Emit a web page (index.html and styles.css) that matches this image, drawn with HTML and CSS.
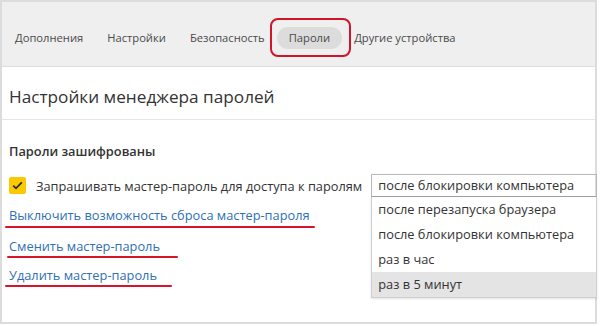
FILE: index.html
```html
<!DOCTYPE html>
<html lang="ru">
<head>
<meta charset="utf-8">
<link rel="stylesheet" href="styles.css">
</head>
<body>
<div class="frame">
  <nav class="tabs">
    <span class="tab">Дополнения</span>
    <span class="tab">Настройки</span>
    <span class="tab">Безопасность</span>
    <span class="tab active">Пароли</span>
    <span class="tab">Другие устройства</span>
  </nav>
  <main class="content">
    <h1 class="title">Настройки менеджера паролей</h1>
    <section class="section">
      <h2 class="subtitle">Пароли зашифрованы</h2>
      <div class="row">
        <span class="check"><svg width="11" height="9" viewBox="0 0 11 9"><path d="M1.2 4.6 L4 7.3 L9.8 1.4" fill="none" stroke="#2b2b2b" stroke-width="1.8"/></svg></span>
        <span class="label">Запрашивать мастер-пароль для доступа к паролям</span>
        <div class="select">
          <div class="select-value">после блокировки компьютера</div>
          <ul class="options">
            <li class="option">после перезапуска браузера</li>
            <li class="option">после блокировки компьютера</li>
            <li class="option">раз в час</li>
            <li class="option hover">раз в 5 минут</li>
          </ul>
        </div>
      </div>
      <div class="links">
        <a class="link mark mark-1">Выключить возможность сброса мастер-пароля</a>
        <a class="link mark mark-2">Сменить мастер-пароль</a>
        <a class="link mark mark-3">Удалить мастер-пароль</a>
      </div>
    </section>
  </main>
</div>
</body>
</html>
```
FILE: styles.css
```css
* { box-sizing: border-box; }
html, body { margin: 0; padding: 0; background: #ffffff; }
body {
  font-family: "Open Sans", "Noto Sans", sans-serif;
  color: #333333;
  width: 600px;
  height: 326px;
  overflow: hidden;
}
.frame {
  width: 597px;
  height: 324px;
  border: 2px solid #dcdcdc;
  background: #ffffff;
  display: flex;
  flex-direction: column;
}
.tabs {
  height: 65px;
  background: #efefef;
  border-bottom: 1px solid #dedede;
  display: flex;
  align-items: flex-start;
  padding: 25px 0 0 1px;
  font-size: 11.2px;
  color: #4a4a4a;
}
.tab {
  padding: 3px 12px 3px;
  line-height: 16px;
  border-radius: 11px;
  position: relative;
}
.tab.active {
  background: #dcdcdc;
}
.tab.active::after {
  content: "";
  position: absolute;
  left: -7px;
  right: -9px;
  top: -9px;
  bottom: -8px;
  border: 2px solid #d0142a;
  border-radius: 8px;
}
.content {
  flex: 1;
  position: relative;
}
.title {
  margin: 0;
  font-weight: 400;
  font-size: 17.2px;
  line-height: 24px;
  color: #333333;
  padding: 18px 7px 10px;
  border-bottom: 1px solid #e6e6e6;
}
.section {
  padding: 22px 7px 0;
}
.subtitle {
  margin: 0;
  font-size: 12.8px;
  font-weight: 600;
  line-height: 18px;
  color: #333333;
}
.row {
  display: flex;
  align-items: center;
  margin-top: 14px;
  font-size: 12.8px;
}
.check {
  width: 17px;
  height: 17px;
  background: #fcc800;
  border-radius: 2px;
  display: flex;
  align-items: center;
  justify-content: center;
  flex: none;
}
.label {
  margin-left: 10px;
  color: #333333;
  white-space: nowrap;
}
.select {
  position: relative;
  margin-left: 9px;
  width: 226px;
  flex: none;
}
.select-value {
  height: 23px;
  border: 1px solid #b9b9b9;
  border-bottom-color: #a0a0a0;
  padding: 0 6px;
  line-height: 21px;
  white-space: nowrap;
  color: #333333;
}
.options {
  position: absolute;
  top: 23px;
  left: 0;
  width: 226px;
  margin: 0;
  padding: 0;
  list-style: none;
  background: #ffffff;
  border: 1px solid #cfcfcf;
  border-top: none;
  box-shadow: 0 1px 2px rgba(0,0,0,0.12);
  z-index: 2;
}
.option {
  height: 25px;
  line-height: 25px;
  padding: 0 6px;
  white-space: nowrap;
  color: #333333;
}
.option.hover { background: #e4e4e4; }
.links {
  display: flex;
  flex-direction: column;
  align-items: flex-start;
  margin-top: 9px;
  gap: 10px;
  font-size: 12.8px;
}
.link {
  color: #2f6fb4;
  line-height: 19px;
  position: relative;
  white-space: nowrap;
}
.mark-2 { margin-top: 2px; }
.mark::after {
  content: "";
  position: absolute;
  height: 2px;
  background: #d8142b;
  border-radius: 1px;
}
.mark-1::after { left: -4px; width: 310px; bottom: -3px; }
.mark-2::after { left: -2px; width: 171px; bottom: -2px; }
.mark-3::after { left: -4px; width: 167px; bottom: -2px; }
```
